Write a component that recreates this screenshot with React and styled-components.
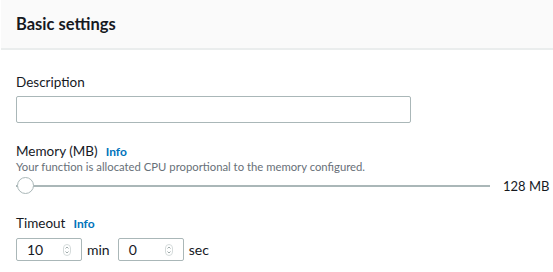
import React from "react";
import styled, { createGlobalStyle } from "styled-components";

const Global = createGlobalStyle`
  html, body { margin: 0; padding: 0; background: #ffffff; }
  body { font-family: Lato, "Open Sans", "Liberation Sans", sans-serif; color: #16191f; }
`;

const Panel = styled.section`
  width: 553px;
  height: 272px;
  background: #ffffff;
  overflow: hidden;
`;

const Header = styled.header`
  height: 48px;
  background: #fafafa;
  border-bottom: 2px solid #eaeded;
  display: flex;
  align-items: center;
  padding: 0 15px;
  margin-left: 1px;
`;

const Title = styled.h2`
  margin: 0;
  font-size: 16.5px;
  font-weight: 700;
  color: #16191f;
`;

const Body = styled.div`
  display: flex;
  flex-direction: column;
  padding: 24px 6px 0 16px;
`;

const Field = styled.div`
  display: flex;
  flex-direction: column;
  margin-bottom: ${(p) => p.$gap || 0}px;
`;

const LabelRow = styled.div`
  display: flex;
  align-items: baseline;
  gap: 8px;
  font-size: 13.5px;
  line-height: 16px;
  color: #16191f;
`;

const Info = styled.a`
  font-size: 12px;
  font-weight: 700;
  color: #0073bb;
  text-decoration: none;
`;

const Hint = styled.div`
  font-size: 11.3px;
  line-height: 14px;
  color: #687078;
`;

const TextInput = styled.input`
  box-sizing: border-box;
  width: 395px;
  height: 27px;
  margin-top: 6px;
  border: 1px solid #aab7b8;
  border-radius: 2px;
  background: #fff;
`;

const SliderRow = styled.div`
  display: flex;
  align-items: center;
  height: 20px;
  margin-top: 2px;
`;

const Track = styled.div`
  position: relative;
  flex: 1;
  height: 2px;
  background: #aab7b8;
  margin-right: 13px;
`;

const Thumb = styled.div`
  position: absolute;
  left: 1px;
  top: -8px;
  width: 17px;
  height: 17px;
  box-sizing: border-box;
  border-radius: 50%;
  background: #fff;
  border: 1px solid #aab7b8;
`;

const SliderValue = styled.span`
  font-size: 13px;
  color: #16191f;
  width: 44px;
  white-space: nowrap;
`;

const NumberRow = styled.div`
  display: flex;
  align-items: center;
  gap: 5px;
  margin-top: 6px;
`;

const NumberBox = styled.div`
  box-sizing: border-box;
  width: 66px;
  height: 23px;
  border: 1px solid #aab7b8;
  border-radius: 2px;
  display: flex;
  align-items: center;
  padding: 0 10px 0 10px;
  justify-content: space-between;
  font-size: 14px;
  color: #16191f;
`;

const Unit = styled.span`
  font-size: 14px;
  color: #16191f;
  margin-right: 3px;
`;

const Spinner = () => (
  <svg width="8" height="12" viewBox="0 0 8 12">
    <rect x="0.5" y="0.5" width="7" height="11" rx="3.5" fill="none" stroke="#d5dbdb" />
    <path d="M2.5 4.5 L4 3 L5.5 4.5" fill="none" stroke="#879596" strokeWidth="0.8" />
    <path d="M2.5 7.5 L4 9 L5.5 7.5" fill="none" stroke="#879596" strokeWidth="0.8" />
  </svg>
);

export default function App() {
  return (
    <>
      <Global />
      <Panel>
        <Header>
          <Title>Basic settings</Title>
        </Header>
        <Body>
          <Field $gap={20}>
            <LabelRow>Description</LabelRow>
            <TextInput type="text" />
          </Field>
          <Field $gap={19}>
            <LabelRow>
              Memory (MB) <Info>Info</Info>
            </LabelRow>
            <Hint>Your function is allocated CPU proportional to the memory configured.</Hint>
            <SliderRow>
              <Track>
                <Thumb />
              </Track>
              <SliderValue>128 MB</SliderValue>
            </SliderRow>
          </Field>
          <Field>
            <LabelRow>
              Timeout <Info>Info</Info>
            </LabelRow>
            <NumberRow>
              <NumberBox>
                <span>10</span>
                <Spinner />
              </NumberBox>
              <Unit>min</Unit>
              <NumberBox>
                <span>0</span>
                <Spinner />
              </NumberBox>
              <Unit>sec</Unit>
            </NumberRow>
          </Field>
        </Body>
      </Panel>
    </>
  );
}
